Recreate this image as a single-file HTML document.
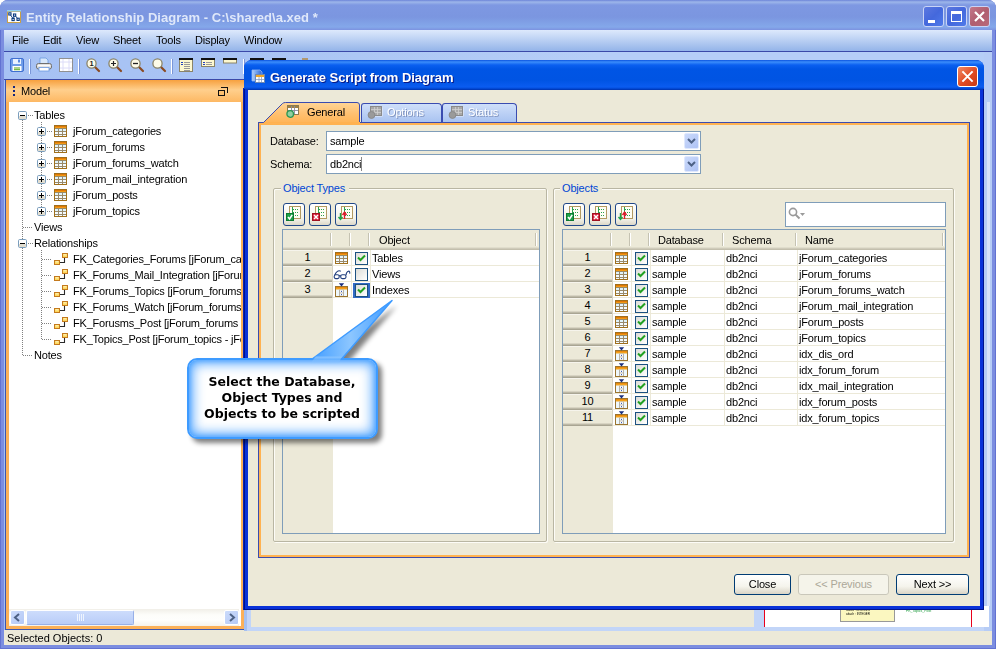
<!DOCTYPE html>
<html><head><meta charset="utf-8"><title>Entity Relationship Diagram</title>
<style>
*{box-sizing:border-box;margin:0;padding:0}
#root{position:absolute;left:0;top:0;width:996px;height:649px}
.t,.rh,.btn{will-change:opacity}
html,body{width:996px;height:649px;overflow:hidden;background:#fff}
body{position:relative;font:11px "Liberation Sans","DejaVu Sans",sans-serif;color:#000;letter-spacing:-0.17px}
.a{position:absolute}
.t{position:absolute;white-space:nowrap;line-height:14px;height:14px}
svg{position:absolute;overflow:visible}
#titlebar{left:0;top:0;width:996px;height:30px;border-radius:8px 8px 0 0;background:linear-gradient(#6c84d8 0,#9db6ea 2px,#7e98e2 5px,#7b96e0 17px,#84a8ea 27px,#7c92e0 30px)}
#title{left:26px;top:9.5px;font:bold 13px "Liberation Sans",sans-serif;color:#dfe8fa;letter-spacing:0.03px;line-height:16px;height:16px}
#menubar{left:4px;top:30px;width:988px;height:21px;background:linear-gradient(#dde9fc,#94b4e9)}
#toolbar{left:4px;top:51px;width:988px;height:29px;background:linear-gradient(90deg,#a7c2f4,#a9c4f4 25%,#b6cef7 60%,#b6cef7);border-top:1px solid #3b49a8;border-bottom:1px solid #3b49a8}
.cap{width:21px;height:21px;top:6px;border:1px solid #c9d4f6;border-radius:3px}

#dlg{left:244px;top:60px;width:740px;height:550px;border-radius:8px 8px 0 0;background:#0831d9;overflow:hidden}
#dtitle{left:0;top:0;width:740px;height:30px;background:linear-gradient(#0a53e0 0,#3b8dfb 2px,#0a5ff0 5px,#0055e5 9px,#0054e3 20px,#0a5cf0 27px,#0043cc 29px,#0030a8 30px)}
#dbody{left:4px;top:30px;width:732px;height:516px;background:#ece9d8}
#dttext{left:26px;top:10px;font:bold 13px "Liberation Sans",sans-serif;color:#fff;text-shadow:1px 1px 0 #0a1883;letter-spacing:-0.05px;line-height:16px;height:16px}
.tab{top:103px;height:19px;border:1px solid #3a4cb0;border-bottom:0;border-radius:3px 4px 0 0;background:linear-gradient(#cfdffa,#a9c3f1)}
.tab .t{color:#fff;text-shadow:1px 1px 0 #8a9cc0;top:3px}
.fs{border:1px solid #b9b6a3;border-radius:2px;box-shadow:inset 1px 1px 0 #fdfcf7,1px 1px 0 #fdfcf7}
.leg{color:#0046d5;background:#ece9d8;padding:0 4px 0 2px}
.sbtn{width:22px;height:23px;border:1px solid #1f4788;border-radius:3px;background:linear-gradient(#fff,#f3f2ea 70%,#dcd8c8)}
.grid{border:1px solid #7f9db9;background:#fff;overflow:hidden}
.hdr{left:0;top:0;height:20px;background:linear-gradient(#ece9d8 0,#ece9d8 17px,#e0ddcc 17px,#e0ddcc 18px,#cfcbba 18px,#cfcbba 19px,#c3bfad 19px)}
.hs{top:3px;width:2px;height:13px;background:linear-gradient(90deg,#c5c2b2 0,#c5c2b2 1px,#fff 1px)}
.rh{left:0;width:50px;height:16px;background:linear-gradient(#f6f4ec 0,#f6f4ec 1px,#ece9d8 1px,#ece9d8 13px,#d8d4c3 13px,#d8d4c3 14px,#bdb9a7 14px,#bdb9a7 15px,#a9a593 15px);text-align:center;line-height:14px;border-right:1px solid #d6d2c2}
.gl{height:1px;background:#ece9d8}
.cb{width:13px;height:13px;border:1px solid #1c5180;background:linear-gradient(135deg,#dcdcd7,#fff)}
.btn{top:574px;height:21px;border:1px solid #003c74;border-radius:3px;background:linear-gradient(#fff,#f5f4ec 60%,#d9d4c6);text-align:center;line-height:19px}
.combo{left:326px;width:375px;height:20px;border:1px solid #7f9db9;background:#fff}
.cbtn{left:357px;top:1px;width:15px;height:16px;border-radius:2px;background:linear-gradient(135deg,#cbdafb,#aec2f4);border:1px solid #dfe8fd}
</style></head>
<body>
<div class="a" style="left:0;top:0;width:996px;height:649px;border-radius:8px 8px 0 0;background:#7b8de0;border-left:1px solid #6272d2;border-right:1px solid #6272d2;border-bottom:1px solid #6272d2"></div>
<div class="a" id="titlebar"></div>
<svg style="left:7px;top:10px" width="14" height="13" viewBox="0 0 14 13" ><rect x="0.5" y="1.500" width="13" height="11" fill="#fff" stroke="#c8a048"/><rect x="0" y="0" width="14" height="1.500" fill="#8fd0f5"/><path d="M3 4.500L6.500 9M8 5.500L11 9M7 6L6.500 9" stroke="#0a3a80" stroke-width="0.9" fill="none"/><rect x="1.8" y="2.8" width="2.200" height="2.200" fill="#fff" stroke="#0a3a80" stroke-width="1.100"/><rect x="6.5" y="4" width="2.200" height="2.200" fill="#fff" stroke="#0a3a80" stroke-width="1.100"/><rect x="5" y="8.4" width="2.200" height="2.200" fill="#fff" stroke="#0a3a80" stroke-width="1.100"/><rect x="10" y="8.2" width="2.200" height="2.200" fill="#fff" stroke="#0a3a80" stroke-width="1.100"/></svg>
<div class="t" id="title">Entity Relationship Diagram - C:\shared\a.xed *</div>
<div class="a cap" style="left:923px;background:linear-gradient(135deg,#5c78e0,#4468dc 50%,#4f7aea)"><div class="a" style="left:4px;top:13px;width:7px;height:3px;background:#fff"></div></div>
<div class="a cap" style="left:946px;background:linear-gradient(135deg,#5c78e0,#4468dc 50%,#4f7aea)"><div class="a" style="left:4px;top:4px;width:11px;height:11px;border:1px solid #fff;border-top-width:3px"></div></div>
<div class="a cap" style="left:969px;background:linear-gradient(135deg,#c4788a,#b05e70 50%,#b8687a)"><svg style="left:4px;top:4px" width="11" height="11" viewBox="0 0 11 11"><path d="M1 1L10 10M10 1L1 10" stroke="#fff" stroke-width="2.2" fill="none"/></svg></div>
<div class="a" id="menubar"></div>
<div class="t" style="left:12px;top:33px">File</div>
<div class="t" style="left:43px;top:33px">Edit</div>
<div class="t" style="left:76px;top:33px">View</div>
<div class="t" style="left:113px;top:33px">Sheet</div>
<div class="t" style="left:156px;top:33px">Tools</div>
<div class="t" style="left:195px;top:33px">Display</div>
<div class="t" style="left:244px;top:33px">Window</div>
<div class="a" id="toolbar"></div>
<svg style="left:10px;top:58px" width="14" height="14" viewBox="0 0 14 14" ><rect x="0.5" y="0.5" width="13" height="13" rx="1.5" fill="#6f9ce8" stroke="#3f6fd0"/><rect x="3" y="1" width="8" height="5" fill="#eaf2ff"/><rect x="2.5" y="8" width="9" height="5" fill="#fff"/><rect x="4" y="9.5" width="6" height="1" fill="#58a818"/><rect x="4" y="11.2" width="6" height="1" fill="#58a818"/><rect x="8" y="1.5" width="2" height="3" fill="#5b8be0"/></svg>
<div class="a" style="left:29px;top:59px;width:2px;height:15px;background:linear-gradient(90deg,#fff 0,#fff 1px,#7a96d8 1px)"></div>
<svg style="left:36px;top:57px" width="16" height="15" viewBox="0 0 16 15" ><path d="M4 1H10L12 3V7H4Z" fill="#d8e8fb" stroke="#6a9ae0" stroke-width="0.8"/><rect x="0.5" y="6.5" width="15" height="5.5" rx="2" fill="#e0e0e0" stroke="#707070"/><rect x="3" y="10.5" width="10" height="3.5" fill="#fff" stroke="#6a9ae0" stroke-width="0.8"/><rect x="2" y="8" width="12" height="1.2" fill="#fafafa"/></svg>
<svg style="left:59px;top:58px" width="14" height="14" viewBox="0 0 14 14" ><rect x="0.5" y="0.5" width="13" height="13" fill="#fff" stroke="#909090"/><path d="M4 1V13M10 1V13M1 4H13M1 10H13" stroke="#dcdcf8" stroke-width="1"/></svg>
<div class="a" style="left:78px;top:59px;width:2px;height:15px;background:linear-gradient(90deg,#fff 0,#fff 1px,#7a96d8 1px)"></div>
<svg style="left:86px;top:58px" width="14" height="14" viewBox="0 0 14 14" ><path d="M8.5 8.5L13 13" stroke="#8a4a20" stroke-width="2.2" stroke-linecap="round"/><circle cx="5.5" cy="5.5" r="4.6" fill="#fdfbe8" stroke="#8a8468" stroke-width="1.3"/><text x="5.600" y="8.300" text-anchor="middle" font-family="Liberation Sans,sans-serif" font-size="7.500" font-weight="bold" fill="#222">1</text></svg>
<svg style="left:108px;top:58px" width="14" height="14" viewBox="0 0 14 14" ><path d="M8.5 8.5L13 13" stroke="#8a4a20" stroke-width="2.2" stroke-linecap="round"/><circle cx="5.5" cy="5.5" r="4.6" fill="#fdfbe8" stroke="#8a8468" stroke-width="1.3"/><path d="M3 5.5H8M5.5 3V8" stroke="#222" stroke-width="1.2" fill="none"/></svg>
<svg style="left:130px;top:58px" width="14" height="14" viewBox="0 0 14 14" ><path d="M8.5 8.5L13 13" stroke="#8a4a20" stroke-width="2.2" stroke-linecap="round"/><circle cx="5.5" cy="5.5" r="4.6" fill="#fdfbe8" stroke="#8a8468" stroke-width="1.3"/><path d="M3 5.5H8" stroke="#222" stroke-width="1.3" fill="none"/></svg>
<svg style="left:152px;top:58px" width="14" height="14" viewBox="0 0 14 14" ><path d="M8.5 8.5L13 13" stroke="#8a4a20" stroke-width="2.2" stroke-linecap="round"/><circle cx="5.5" cy="5.5" r="4.6" fill="#fdfbe8" stroke="#8a8468" stroke-width="1.3"/></svg>
<div class="a" style="left:171px;top:59px;width:2px;height:15px;background:linear-gradient(90deg,#fff 0,#fff 1px,#7a96d8 1px)"></div>
<svg style="left:179px;top:58px" width="14" height="14" viewBox="0 0 14 14" ><rect x="0.5" y="0.5" width="13" height="13" fill="#fdf8d0" stroke="#8a8468"/><rect x="0" y="0" width="14" height="2" fill="#111"/><rect x="5" y="4" width="6" height="1" fill="#999"/><rect x="5" y="6" width="6" height="1" fill="#999"/><rect x="5" y="8" width="6" height="1" fill="#999"/><rect x="5" y="10" width="6" height="1" fill="#999"/><rect x="5" y="12" width="6" height="1" fill="#999"/><rect x="2" y="4" width="2" height="1" fill="#2040c0"/><rect x="2" y="6" width="2" height="1" fill="#2040c0"/></svg>
<svg style="left:201px;top:58px" width="14" height="9" viewBox="0 0 14 9" ><rect x="0.5" y="0.5" width="13" height="8" fill="#fdf8d0" stroke="#8a8468"/><rect x="0" y="0" width="14" height="2" fill="#111"/><rect x="2" y="4" width="2" height="1" fill="#2040c0"/><rect x="2" y="6" width="2" height="1" fill="#2040c0"/><rect x="5" y="4" width="6" height="1" fill="#999"/><rect x="5" y="6" width="6" height="1" fill="#999"/></svg>
<svg style="left:223px;top:58px" width="14" height="5" viewBox="0 0 14 5" ><rect x="0.5" y="0.5" width="13" height="4.5" fill="#fdf8d0" stroke="#8a8468"/><rect x="0" y="0" width="14" height="2" fill="#111"/></svg>
<div class="a" style="left:243px;top:59px;width:2px;height:15px;background:linear-gradient(90deg,#fff 0,#fff 1px,#7a96d8 1px)"></div>
<div class="a" style="left:250px;top:58px;width:14px;height:2px;background:#111"></div>
<div class="a" style="left:272px;top:58px;width:14px;height:2px;background:#111"></div>
<div class="a" style="left:302px;top:58px;width:6px;height:2px;background:#b09870"></div>
<div class="a" style="left:4px;top:80px;width:2px;height:565px;background:#a3bff4"></div>
<div class="a" style="left:5px;top:80px;width:1px;height:550px;background:#3b55b0"></div>
<div class="a" style="left:6px;top:80px;width:238px;height:550px;background:#fbb058"></div>
<div class="a" style="left:6px;top:80px;width:238px;height:22px;background:linear-gradient(#f7a13f,#ffcf8c 45%,#fdb863)"></div>
<div class="a" style="left:9px;top:102px;width:232px;height:524px;background:#fff"></div>
<div class="a" style="left:13px;top:86px;width:2px;height:2px;background:#16277c"></div>
<div class="a" style="left:13px;top:90px;width:2px;height:2px;background:#16277c"></div>
<div class="a" style="left:13px;top:94px;width:2px;height:2px;background:#16277c"></div>
<div class="t" style="left:21px;top:84px">Model</div>
<div class="a" style="left:221px;top:87px;width:7px;height:6px;border:1px solid #111;border-left:0;border-bottom:0"></div>
<div class="a" style="left:218px;top:90px;width:7px;height:6px;border:1px solid #111;background:#fdc070"></div>
<div class="a" style="left:22px;top:120px;width:1px;height:236px;background:repeating-linear-gradient(#808080 0,#808080 1px,transparent 1px,transparent 2px)"></div>
<svg style="left:18px;top:111px" width="9" height="9" viewBox="0 0 9 9" ><rect x="0.5" y="0.5" width="8" height="8" rx="1.2" fill="#fff" stroke="#7b9ebd"/><rect x="1" y="5" width="7" height="3" fill="#d9d4c4" opacity="0.8"/><path d="M2 4.5H7" stroke="#000" stroke-width="1" fill="none"/></svg>
<div class="a" style="left:28px;top:115px;width:5px;height:1px;background:repeating-linear-gradient(90deg,#808080 0,#808080 1px,transparent 1px,transparent 2px)"></div>
<div class="t" style="left:34px;top:108px">Tables</div>
<div class="a" style="left:41px;top:122px;width:1px;height:90px;background:repeating-linear-gradient(#808080 0,#808080 1px,transparent 1px,transparent 2px)"></div>
<svg style="left:37px;top:127px" width="9" height="9" viewBox="0 0 9 9" ><rect x="0.5" y="0.5" width="8" height="8" rx="1.2" fill="#fff" stroke="#7b9ebd"/><rect x="1" y="5" width="7" height="3" fill="#d9d4c4" opacity="0.8"/><path d="M2 4.5H7 M4.5 2V7" stroke="#000" stroke-width="1" fill="none"/></svg>
<div class="a" style="left:47px;top:131px;width:5px;height:1px;background:repeating-linear-gradient(90deg,#808080 0,#808080 1px,transparent 1px,transparent 2px)"></div>
<svg style="left:54px;top:125px" width="13" height="12" viewBox="0 0 13 12" ><rect x="0.5" y="0.5" width="12" height="11" fill="#f4fbff" stroke="#a0701c"/><rect x="1" y="1" width="11" height="2" fill="#f29a12"/><rect x="1" y="1" width="11" height="1" fill="#e07808"/><path d="M1 3.5H12M1 6.5H12M1 9.5H12M4.5 3V11M8.5 3V11" stroke="#9a8a6a" stroke-width="1" fill="none"/><rect x="5" y="4" width="3" height="2" fill="#dff3fb"/><rect x="1" y="4" width="3" height="2" fill="#dff3fb"/><rect x="9" y="4" width="3" height="2" fill="#dff3fb"/></svg>
<div class="t" style="left:73px;top:124px">jForum_categories</div>
<svg style="left:37px;top:143px" width="9" height="9" viewBox="0 0 9 9" ><rect x="0.5" y="0.5" width="8" height="8" rx="1.2" fill="#fff" stroke="#7b9ebd"/><rect x="1" y="5" width="7" height="3" fill="#d9d4c4" opacity="0.8"/><path d="M2 4.5H7 M4.5 2V7" stroke="#000" stroke-width="1" fill="none"/></svg>
<div class="a" style="left:47px;top:147px;width:5px;height:1px;background:repeating-linear-gradient(90deg,#808080 0,#808080 1px,transparent 1px,transparent 2px)"></div>
<svg style="left:54px;top:141px" width="13" height="12" viewBox="0 0 13 12" ><rect x="0.5" y="0.5" width="12" height="11" fill="#f4fbff" stroke="#a0701c"/><rect x="1" y="1" width="11" height="2" fill="#f29a12"/><rect x="1" y="1" width="11" height="1" fill="#e07808"/><path d="M1 3.5H12M1 6.5H12M1 9.5H12M4.5 3V11M8.5 3V11" stroke="#9a8a6a" stroke-width="1" fill="none"/><rect x="5" y="4" width="3" height="2" fill="#dff3fb"/><rect x="1" y="4" width="3" height="2" fill="#dff3fb"/><rect x="9" y="4" width="3" height="2" fill="#dff3fb"/></svg>
<div class="t" style="left:73px;top:140px">jForum_forums</div>
<svg style="left:37px;top:159px" width="9" height="9" viewBox="0 0 9 9" ><rect x="0.5" y="0.5" width="8" height="8" rx="1.2" fill="#fff" stroke="#7b9ebd"/><rect x="1" y="5" width="7" height="3" fill="#d9d4c4" opacity="0.8"/><path d="M2 4.5H7 M4.5 2V7" stroke="#000" stroke-width="1" fill="none"/></svg>
<div class="a" style="left:47px;top:163px;width:5px;height:1px;background:repeating-linear-gradient(90deg,#808080 0,#808080 1px,transparent 1px,transparent 2px)"></div>
<svg style="left:54px;top:157px" width="13" height="12" viewBox="0 0 13 12" ><rect x="0.5" y="0.5" width="12" height="11" fill="#f4fbff" stroke="#a0701c"/><rect x="1" y="1" width="11" height="2" fill="#f29a12"/><rect x="1" y="1" width="11" height="1" fill="#e07808"/><path d="M1 3.5H12M1 6.5H12M1 9.5H12M4.5 3V11M8.5 3V11" stroke="#9a8a6a" stroke-width="1" fill="none"/><rect x="5" y="4" width="3" height="2" fill="#dff3fb"/><rect x="1" y="4" width="3" height="2" fill="#dff3fb"/><rect x="9" y="4" width="3" height="2" fill="#dff3fb"/></svg>
<div class="t" style="left:73px;top:156px">jForum_forums_watch</div>
<svg style="left:37px;top:175px" width="9" height="9" viewBox="0 0 9 9" ><rect x="0.5" y="0.5" width="8" height="8" rx="1.2" fill="#fff" stroke="#7b9ebd"/><rect x="1" y="5" width="7" height="3" fill="#d9d4c4" opacity="0.8"/><path d="M2 4.5H7 M4.5 2V7" stroke="#000" stroke-width="1" fill="none"/></svg>
<div class="a" style="left:47px;top:179px;width:5px;height:1px;background:repeating-linear-gradient(90deg,#808080 0,#808080 1px,transparent 1px,transparent 2px)"></div>
<svg style="left:54px;top:173px" width="13" height="12" viewBox="0 0 13 12" ><rect x="0.5" y="0.5" width="12" height="11" fill="#f4fbff" stroke="#a0701c"/><rect x="1" y="1" width="11" height="2" fill="#f29a12"/><rect x="1" y="1" width="11" height="1" fill="#e07808"/><path d="M1 3.5H12M1 6.5H12M1 9.5H12M4.5 3V11M8.5 3V11" stroke="#9a8a6a" stroke-width="1" fill="none"/><rect x="5" y="4" width="3" height="2" fill="#dff3fb"/><rect x="1" y="4" width="3" height="2" fill="#dff3fb"/><rect x="9" y="4" width="3" height="2" fill="#dff3fb"/></svg>
<div class="t" style="left:73px;top:172px">jForum_mail_integration</div>
<svg style="left:37px;top:191px" width="9" height="9" viewBox="0 0 9 9" ><rect x="0.5" y="0.5" width="8" height="8" rx="1.2" fill="#fff" stroke="#7b9ebd"/><rect x="1" y="5" width="7" height="3" fill="#d9d4c4" opacity="0.8"/><path d="M2 4.5H7 M4.5 2V7" stroke="#000" stroke-width="1" fill="none"/></svg>
<div class="a" style="left:47px;top:195px;width:5px;height:1px;background:repeating-linear-gradient(90deg,#808080 0,#808080 1px,transparent 1px,transparent 2px)"></div>
<svg style="left:54px;top:189px" width="13" height="12" viewBox="0 0 13 12" ><rect x="0.5" y="0.5" width="12" height="11" fill="#f4fbff" stroke="#a0701c"/><rect x="1" y="1" width="11" height="2" fill="#f29a12"/><rect x="1" y="1" width="11" height="1" fill="#e07808"/><path d="M1 3.5H12M1 6.5H12M1 9.5H12M4.5 3V11M8.5 3V11" stroke="#9a8a6a" stroke-width="1" fill="none"/><rect x="5" y="4" width="3" height="2" fill="#dff3fb"/><rect x="1" y="4" width="3" height="2" fill="#dff3fb"/><rect x="9" y="4" width="3" height="2" fill="#dff3fb"/></svg>
<div class="t" style="left:73px;top:188px">jForum_posts</div>
<svg style="left:37px;top:207px" width="9" height="9" viewBox="0 0 9 9" ><rect x="0.5" y="0.5" width="8" height="8" rx="1.2" fill="#fff" stroke="#7b9ebd"/><rect x="1" y="5" width="7" height="3" fill="#d9d4c4" opacity="0.8"/><path d="M2 4.5H7 M4.5 2V7" stroke="#000" stroke-width="1" fill="none"/></svg>
<div class="a" style="left:47px;top:211px;width:5px;height:1px;background:repeating-linear-gradient(90deg,#808080 0,#808080 1px,transparent 1px,transparent 2px)"></div>
<svg style="left:54px;top:205px" width="13" height="12" viewBox="0 0 13 12" ><rect x="0.5" y="0.5" width="12" height="11" fill="#f4fbff" stroke="#a0701c"/><rect x="1" y="1" width="11" height="2" fill="#f29a12"/><rect x="1" y="1" width="11" height="1" fill="#e07808"/><path d="M1 3.5H12M1 6.5H12M1 9.5H12M4.5 3V11M8.5 3V11" stroke="#9a8a6a" stroke-width="1" fill="none"/><rect x="5" y="4" width="3" height="2" fill="#dff3fb"/><rect x="1" y="4" width="3" height="2" fill="#dff3fb"/><rect x="9" y="4" width="3" height="2" fill="#dff3fb"/></svg>
<div class="t" style="left:73px;top:204px">jForum_topics</div>
<div class="a" style="left:23px;top:227px;width:9px;height:1px;background:repeating-linear-gradient(90deg,#808080 0,#808080 1px,transparent 1px,transparent 2px)"></div>
<div class="t" style="left:34px;top:220px">Views</div>
<svg style="left:18px;top:239px" width="9" height="9" viewBox="0 0 9 9" ><rect x="0.5" y="0.5" width="8" height="8" rx="1.2" fill="#fff" stroke="#7b9ebd"/><rect x="1" y="5" width="7" height="3" fill="#d9d4c4" opacity="0.8"/><path d="M2 4.5H7" stroke="#000" stroke-width="1" fill="none"/></svg>
<div class="a" style="left:28px;top:243px;width:5px;height:1px;background:repeating-linear-gradient(90deg,#808080 0,#808080 1px,transparent 1px,transparent 2px)"></div>
<div class="t" style="left:34px;top:236px">Relationships</div>
<div class="a" style="left:41px;top:250px;width:1px;height:90px;background:repeating-linear-gradient(#808080 0,#808080 1px,transparent 1px,transparent 2px)"></div>
<div class="a" style="left:9px;top:250px;width:232px;height:100px;overflow:hidden">
<div class="t" style="left:64px;top:2px;letter-spacing:-0.2px">FK_Categories_Forums [jForum_categories - jForum_forums]</div>
<div class="t" style="left:64px;top:18px;letter-spacing:-0.2px">FK_Forums_Mail_Integration [jForum_forums - jForum_mail_integration]</div>
<div class="t" style="left:64px;top:34px;letter-spacing:-0.2px">FK_Forums_Topics [jForum_forums - jForum_topics]</div>
<div class="t" style="left:64px;top:50px;letter-spacing:-0.2px">FK_Forums_Watch [jForum_forums - jForum_forums_watch]</div>
<div class="t" style="left:64px;top:66px;letter-spacing:-0.2px">FK_Forusms_Post [jForum_forums - jForum_posts]</div>
<div class="t" style="left:64px;top:82px;letter-spacing:-0.2px">FK_Topics_Post [jForum_topics - jForum_posts]</div>
</div>
<div class="a" style="left:42px;top:259px;width:10px;height:1px;background:repeating-linear-gradient(90deg,#808080 0,#808080 1px,transparent 1px,transparent 2px)"></div>
<svg style="left:54px;top:253px" width="14" height="12" viewBox="0 0 14 12" ><path d="M6 9.5H10.5V5" stroke="#2a2a2a" stroke-width="1.1" fill="none"/><rect x="8.5" y="0.5" width="5" height="4" fill="#ffd85c" stroke="#c47a1e"/><rect x="0.5" y="7.5" width="5" height="4" fill="#ffd85c" stroke="#c47a1e"/><rect x="9.5" y="1.2" width="3" height="1.2" fill="#fff3b8"/><rect x="1.5" y="8.2" width="3" height="1.2" fill="#fff3b8"/></svg>
<div class="a" style="left:42px;top:275px;width:10px;height:1px;background:repeating-linear-gradient(90deg,#808080 0,#808080 1px,transparent 1px,transparent 2px)"></div>
<svg style="left:54px;top:269px" width="14" height="12" viewBox="0 0 14 12" ><path d="M6 9.5H10.5V5" stroke="#2a2a2a" stroke-width="1.1" fill="none"/><rect x="8.5" y="0.5" width="5" height="4" fill="#ffd85c" stroke="#c47a1e"/><rect x="0.5" y="7.5" width="5" height="4" fill="#ffd85c" stroke="#c47a1e"/><rect x="9.5" y="1.2" width="3" height="1.2" fill="#fff3b8"/><rect x="1.5" y="8.2" width="3" height="1.2" fill="#fff3b8"/></svg>
<div class="a" style="left:42px;top:291px;width:10px;height:1px;background:repeating-linear-gradient(90deg,#808080 0,#808080 1px,transparent 1px,transparent 2px)"></div>
<svg style="left:54px;top:285px" width="14" height="12" viewBox="0 0 14 12" ><path d="M6 9.5H10.5V5" stroke="#2a2a2a" stroke-width="1.1" fill="none"/><rect x="8.5" y="0.5" width="5" height="4" fill="#ffd85c" stroke="#c47a1e"/><rect x="0.5" y="7.5" width="5" height="4" fill="#ffd85c" stroke="#c47a1e"/><rect x="9.5" y="1.2" width="3" height="1.2" fill="#fff3b8"/><rect x="1.5" y="8.2" width="3" height="1.2" fill="#fff3b8"/></svg>
<div class="a" style="left:42px;top:307px;width:10px;height:1px;background:repeating-linear-gradient(90deg,#808080 0,#808080 1px,transparent 1px,transparent 2px)"></div>
<svg style="left:54px;top:301px" width="14" height="12" viewBox="0 0 14 12" ><path d="M6 9.5H10.5V5" stroke="#2a2a2a" stroke-width="1.1" fill="none"/><rect x="8.5" y="0.5" width="5" height="4" fill="#ffd85c" stroke="#c47a1e"/><rect x="0.5" y="7.5" width="5" height="4" fill="#ffd85c" stroke="#c47a1e"/><rect x="9.5" y="1.2" width="3" height="1.2" fill="#fff3b8"/><rect x="1.5" y="8.2" width="3" height="1.2" fill="#fff3b8"/></svg>
<div class="a" style="left:42px;top:323px;width:10px;height:1px;background:repeating-linear-gradient(90deg,#808080 0,#808080 1px,transparent 1px,transparent 2px)"></div>
<svg style="left:54px;top:317px" width="14" height="12" viewBox="0 0 14 12" ><path d="M6 9.5H10.5V5" stroke="#2a2a2a" stroke-width="1.1" fill="none"/><rect x="8.5" y="0.5" width="5" height="4" fill="#ffd85c" stroke="#c47a1e"/><rect x="0.5" y="7.5" width="5" height="4" fill="#ffd85c" stroke="#c47a1e"/><rect x="9.5" y="1.2" width="3" height="1.2" fill="#fff3b8"/><rect x="1.5" y="8.2" width="3" height="1.2" fill="#fff3b8"/></svg>
<div class="a" style="left:42px;top:339px;width:10px;height:1px;background:repeating-linear-gradient(90deg,#808080 0,#808080 1px,transparent 1px,transparent 2px)"></div>
<svg style="left:54px;top:333px" width="14" height="12" viewBox="0 0 14 12" ><path d="M6 9.5H10.5V5" stroke="#2a2a2a" stroke-width="1.1" fill="none"/><rect x="8.5" y="0.5" width="5" height="4" fill="#ffd85c" stroke="#c47a1e"/><rect x="0.5" y="7.5" width="5" height="4" fill="#ffd85c" stroke="#c47a1e"/><rect x="9.5" y="1.2" width="3" height="1.2" fill="#fff3b8"/><rect x="1.5" y="8.2" width="3" height="1.2" fill="#fff3b8"/></svg>
<div class="a" style="left:23px;top:355px;width:9px;height:1px;background:repeating-linear-gradient(90deg,#808080 0,#808080 1px,transparent 1px,transparent 2px)"></div>
<div class="t" style="left:34px;top:348px">Notes</div>
<div class="a" style="left:9px;top:609px;width:230px;height:17px;background:linear-gradient(#f1efe8,#fdfdfa 35%,#fefefc 65%,#f4f2ec)"></div>
<div class="a" style="left:10px;top:610px;width:15px;height:15px;border-radius:2px;background:linear-gradient(135deg,#cbdbfb,#b4c8f5);border:1px solid #fff"></div>
<svg style="left:13px;top:613px" width="8" height="9"><path d="M6 1L2 4.5L6 8" stroke="#4d6185" stroke-width="2" fill="none"/></svg>
<div class="a" style="left:224px;top:610px;width:15px;height:15px;border-radius:2px;background:linear-gradient(135deg,#cbdbfb,#b4c8f5);border:1px solid #fff"></div>
<svg style="left:228px;top:613px" width="8" height="9"><path d="M2 1L6 4.5L2 8" stroke="#4d6185" stroke-width="2" fill="none"/></svg>
<div class="a" style="left:26px;top:610px;width:108px;height:15px;border-radius:2px;background:linear-gradient(#cddcfc,#b9cdf8);border:1px solid #fff;border-right-color:#98b0e8;border-bottom-color:#98b0e8"></div>
<div class="a" style="left:77px;top:614px;width:1px;height:7px;background:#eef4fe"></div>
<div class="a" style="left:79px;top:614px;width:1px;height:7px;background:#eef4fe"></div>
<div class="a" style="left:81px;top:614px;width:1px;height:7px;background:#eef4fe"></div>
<div class="a" style="left:83px;top:614px;width:1px;height:7px;background:#eef4fe"></div>
<div class="a" style="left:4px;top:630px;width:988px;height:15px;background:#ece9d8"></div>
<div class="t" style="left:7px;top:631px;letter-spacing:0">Selected Objects: 0</div>
<div class="a" style="left:244px;top:606px;width:3px;height:25px;background:#a5c0f0"></div>
<div class="a" style="left:247px;top:606px;width:745px;height:25px;background:#c2d5f8"></div>
<div class="a" style="left:251px;top:610px;width:503px;height:17px;background:#ece9d8"></div>
<div class="a" style="left:764px;top:606px;width:224px;height:21px;background:#fff"></div>
<div class="a" style="left:764px;top:606px;width:1px;height:21px;background:#e8001c"></div>
<div class="a" style="left:971px;top:606px;width:1px;height:21px;background:#e8001c"></div>
<div class="a" style="left:840px;top:606px;width:55px;height:16px;background:#fbf7c0;border:1px solid #999;border-top:0"></div>
<div class="t" style="left:846px;top:608px;font-size:3px;line-height:4px;height:8px;letter-spacing:0">status : INTEGER<br>attach : INTEGER</div>
<div class="t" style="left:906px;top:609px;font-size:3.5px;line-height:4px;height:4px;color:#1a9a3a;letter-spacing:0">FK_Topics_Post</div>
<div class="a" style="left:984px;top:52px;width:8px;height:579px;background:#b6ccf6"></div>
<div class="a" style="left:987px;top:102px;width:3px;height:504px;background:#d8e3f9"></div>
<div class="a" style="left:984px;top:606px;width:5px;height:21px;background:#fff"></div>
<div class="a" style="left:5px;top:629px;width:239px;height:1px;background:#3b55b0"></div>
<div class="a" style="left:243px;top:88px;width:2px;height:522px;background:#0b22b0"></div>
<div class="a" id="dlg"><div class="a" id="dtitle"></div><div class="a" id="dbody"></div>
<div class="a" style="left:0;top:29px;width:1px;height:521px;background:#00138c"></div><div class="a" style="left:739px;top:29px;width:1px;height:521px;background:#00138c"></div><div class="a" style="left:0;top:549px;width:740px;height:1px;background:#00138c"></div>
<svg style="left:7px;top:9px" width="14" height="14" viewBox="0 0 14 14" ><defs><linearGradient id="dg" x1="0" y1="0" x2="1" y2="0"><stop offset="0" stop-color="#b4d0fa"/><stop offset="0.45" stop-color="#6fa0ee"/><stop offset="1" stop-color="#2f66d6"/></linearGradient></defs><path d="M1 1H9L11 3V12H1Z" fill="url(#dg)" stroke="#8db4f4" stroke-width="0.8"/><rect x="4.5" y="5.5" width="9" height="8" fill="#fff" stroke="#7088b0"/><rect x="5" y="6" width="8" height="2" fill="#f0a828"/><path d="M5 10.5H13M8 8V13M10.5 8V13" stroke="#8aa0c8" stroke-width="0.8"/></svg>
<div class="t" id="dttext">Generate Script from Diagram</div>
<div class="a" style="left:713px;top:6px;width:21px;height:21px;border:1px solid #fff;border-radius:3px;background:linear-gradient(135deg,#f08a66,#e04a22 55%,#c63a14)"><svg style="left:4px;top:4px" width="11" height="11" viewBox="0 0 11 11"><path d="M0.400 0.400L10.600 10.600M10.600 0.400L0.400 10.600" stroke="#fff" stroke-width="2" fill="none"/></svg></div>
</div>
<div class="a" style="left:258px;top:122px;width:712px;height:436px;border:1px solid #3a4cb0;background:#ffb251"></div>
<div class="a" style="left:261px;top:125px;width:706px;height:430px;background:#ece9d8"></div>
<svg style="left:258px;top:101px" width="104" height="24" viewBox="0 0 104 24"><defs><linearGradient id="tg" x1="0" y1="0" x2="0" y2="1"><stop offset="0" stop-color="#ffd596"/><stop offset="0.5" stop-color="#ffc070"/><stop offset="1" stop-color="#ffb251"/></linearGradient></defs><path d="M0.5 24V21.5H5.5L24.5 2.5Q25.5 1.5 27.5 1.5H99Q101.500 1.500 101.500 4V21.5" fill="url(#tg)" stroke="none"/><path d="M0.5 24V21.5H5.5L24.5 2.5Q25.5 1.5 27.5 1.5H99Q101.500 1.500 101.500 4V21.500" fill="none" stroke="#3a4cb0" stroke-width="1"/></svg>
<div class="a" style="left:264px;top:122px;width:96px;height:1px;background:#ffb251"></div>
<svg style="left:285px;top:105px" width="16" height="13" viewBox="0 0 16 13" ><rect x="2.500" y="0.500" width="11" height="9" fill="#fff" stroke="#8a7a50"/><rect x="3" y="1" width="10" height="2" fill="#a08040"/><path d="M3 5.500H13M6.500 1V9M9.500 1V9" stroke="#8a8a9a" stroke-width="0.9"/><circle cx="5.2" cy="9" r="3.3" fill="#8fd0a0" stroke="#2a9652" stroke-width="1.300"/></svg>
<div class="t" style="left:307px;top:105px">General</div>
<div class="a tab" style="left:361px;width:81px"></div>
<div class="a tab" style="left:442px;width:75px"></div>
<svg style="left:368px;top:106px" width="16" height="13" viewBox="0 0 16 13" ><rect x="3.500" y="1.500" width="11" height="9" fill="#fff" opacity="0.7"/><rect x="2.500" y="0.500" width="11" height="9" fill="#a9a9a9" stroke="#8a8a8a"/><path d="M3 3.500H13M3 6.500H13M6.500 1V9M9.500 1V9" stroke="#d0d0d0" stroke-width="0.8"/><circle cx="3.500" cy="9" r="3.400" fill="#9a9a9a" stroke="#8a8a8a" stroke-width="1"/></svg>
<svg style="left:449px;top:106px" width="16" height="13" viewBox="0 0 16 13" ><rect x="3.500" y="1.500" width="11" height="9" fill="#fff" opacity="0.7"/><rect x="2.500" y="0.500" width="11" height="9" fill="#a9a9a9" stroke="#8a8a8a"/><path d="M3 3.500H13M3 6.500H13M6.500 1V9M9.500 1V9" stroke="#d0d0d0" stroke-width="0.8"/><circle cx="3.500" cy="9" r="3.400" fill="#9a9a9a" stroke="#8a8a8a" stroke-width="1"/></svg>
<div class="t" style="left:387px;top:105px;color:#fff;text-shadow:1px 1px 0 #8093bd">Options</div>
<div class="t" style="left:468px;top:105px;color:#fff;text-shadow:1px 1px 0 #8093bd">Status</div>
<div class="t" style="left:270px;top:134px">Database:</div>
<div class="t" style="left:270px;top:157px">Schema:</div>
<div class="a combo" style="top:131px"><div class="t" style="left:3px;top:2px">sample</div><div class="a cbtn"></div><svg style="left:360px;top:6px" width="9" height="7"><path d="M1 1L4.500 4.500L8 1" stroke="#4d6185" stroke-width="2" fill="none"/></svg></div>
<div class="a combo" style="top:154px"><div class="t" style="left:3px;top:2px">db2nci</div><div class="a cbtn"></div><svg style="left:360px;top:6px" width="9" height="7"><path d="M1 1L4.500 4.500L8 1" stroke="#4d6185" stroke-width="2" fill="none"/></svg></div>
<div class="a" style="left:361px;top:157px;width:1px;height:14px;background:#8a8a8a"></div>
<div class="a fs" style="left:273px;top:188px;width:274px;height:354px"></div>
<div class="t leg" style="left:281px;top:181px">Object Types</div>
<div class="a fs" style="left:553px;top:188px;width:401px;height:354px"></div>
<div class="t leg" style="left:560px;top:181px">Objects</div>
<div class="a sbtn" style="left:283px;top:203px"></div>
<svg style="left:286px;top:206px" width="16" height="16" viewBox="0 0 16 16" ><rect x="3.5" y="0.5" width="11" height="12" fill="#fffef4" stroke="#b39a62"/><path d="M6.5 1V12" stroke="#2aa050" stroke-width="1"/><path d="M7 3.5H13" stroke="#2aa050" stroke-width="1" stroke-dasharray="1 1"/><path d="M7 6.5H13" stroke="#2aa050" stroke-width="1" stroke-dasharray="1 1"/><path d="M7 9.5H13" stroke="#2aa050" stroke-width="1" stroke-dasharray="1 1"/><rect x="0.5" y="7.5" width="7" height="7" fill="#1da04a" stroke="#0c7a30"/><path d="M2 11L3.6 13L6.2 8.8" stroke="#fff" stroke-width="1.5" fill="none"/></svg>
<div class="a sbtn" style="left:309px;top:203px"></div>
<svg style="left:312px;top:206px" width="16" height="16" viewBox="0 0 16 16" ><rect x="3.5" y="0.5" width="11" height="12" fill="#fffef4" stroke="#b39a62"/><path d="M6.5 1V12" stroke="#2aa050" stroke-width="1"/><path d="M7 3.5H13" stroke="#2aa050" stroke-width="1" stroke-dasharray="1 1"/><path d="M7 6.5H13" stroke="#2aa050" stroke-width="1" stroke-dasharray="1 1"/><path d="M7 9.5H13" stroke="#2aa050" stroke-width="1" stroke-dasharray="1 1"/><rect x="0.5" y="7.5" width="7" height="7" fill="#d8203a" stroke="#a01020"/><path d="M2 9L6 13M6 9L2 13" stroke="#fff" stroke-width="1.5" fill="none"/></svg>
<div class="a sbtn" style="left:335px;top:203px"></div>
<svg style="left:338px;top:206px" width="16" height="16" viewBox="0 0 16 16" ><rect x="3.5" y="0.5" width="11" height="12" fill="#fffef4" stroke="#b39a62"/><path d="M6.5 1V12" stroke="#2aa050" stroke-width="1"/><path d="M7 3.5H13" stroke="#2aa050" stroke-width="1" stroke-dasharray="1 1"/><path d="M7 6.5H13" stroke="#2aa050" stroke-width="1" stroke-dasharray="1 1"/><path d="M7 9.5H13" stroke="#2aa050" stroke-width="1" stroke-dasharray="1 1"/><path d="M2.5 7V13M0.5 11L2.5 13.5L4.5 11" stroke="#1da04a" stroke-width="1.4" fill="none"/><path d="M6.5 13V7M4.5 9L6.5 6.2L8.5 9" stroke="#e0182c" stroke-width="1.4" fill="none"/></svg>
<div class="a sbtn" style="left:563px;top:203px"></div>
<svg style="left:566px;top:206px" width="16" height="16" viewBox="0 0 16 16" ><rect x="3.5" y="0.5" width="11" height="12" fill="#fffef4" stroke="#b39a62"/><path d="M6.5 1V12" stroke="#2aa050" stroke-width="1"/><path d="M7 3.5H13" stroke="#2aa050" stroke-width="1" stroke-dasharray="1 1"/><path d="M7 6.5H13" stroke="#2aa050" stroke-width="1" stroke-dasharray="1 1"/><path d="M7 9.5H13" stroke="#2aa050" stroke-width="1" stroke-dasharray="1 1"/><rect x="0.5" y="7.5" width="7" height="7" fill="#1da04a" stroke="#0c7a30"/><path d="M2 11L3.6 13L6.2 8.8" stroke="#fff" stroke-width="1.5" fill="none"/></svg>
<div class="a sbtn" style="left:589px;top:203px"></div>
<svg style="left:592px;top:206px" width="16" height="16" viewBox="0 0 16 16" ><rect x="3.5" y="0.5" width="11" height="12" fill="#fffef4" stroke="#b39a62"/><path d="M6.5 1V12" stroke="#2aa050" stroke-width="1"/><path d="M7 3.5H13" stroke="#2aa050" stroke-width="1" stroke-dasharray="1 1"/><path d="M7 6.5H13" stroke="#2aa050" stroke-width="1" stroke-dasharray="1 1"/><path d="M7 9.5H13" stroke="#2aa050" stroke-width="1" stroke-dasharray="1 1"/><rect x="0.5" y="7.5" width="7" height="7" fill="#d8203a" stroke="#a01020"/><path d="M2 9L6 13M6 9L2 13" stroke="#fff" stroke-width="1.5" fill="none"/></svg>
<div class="a sbtn" style="left:615px;top:203px"></div>
<svg style="left:618px;top:206px" width="16" height="16" viewBox="0 0 16 16" ><rect x="3.5" y="0.5" width="11" height="12" fill="#fffef4" stroke="#b39a62"/><path d="M6.5 1V12" stroke="#2aa050" stroke-width="1"/><path d="M7 3.5H13" stroke="#2aa050" stroke-width="1" stroke-dasharray="1 1"/><path d="M7 6.5H13" stroke="#2aa050" stroke-width="1" stroke-dasharray="1 1"/><path d="M7 9.5H13" stroke="#2aa050" stroke-width="1" stroke-dasharray="1 1"/><path d="M2.5 7V13M0.5 11L2.5 13.5L4.5 11" stroke="#1da04a" stroke-width="1.4" fill="none"/><path d="M6.5 13V7M4.5 9L6.5 6.2L8.5 9" stroke="#e0182c" stroke-width="1.4" fill="none"/></svg>
<div class="a grid" style="left:282px;top:229px;width:258px;height:305px">
<div class="a" style="left:0;top:20px;width:50px;height:285px;background:#ece9d8"></div>
<div class="a hdr" style="width:256px"></div>
<div class="a hs" style="left:47px"></div>
<div class="a hs" style="left:66px"></div>
<div class="a hs" style="left:85px"></div>
<div class="a hs" style="left:252px"></div>
<div class="t" style="left:96px;top:3px">Object</div>
<div class="a rh" style="top:20px">1</div>
<div class="a gl" style="left:50px;top:35px;width:206px"></div>
<div class="a" style="left:68px;top:20px;width:1px;height:16px;background:#ece9d8"></div>
<div class="a" style="left:87px;top:20px;width:1px;height:16px;background:#ece9d8"></div>
<svg style="left:52px;top:22px" width="13" height="12" viewBox="0 0 13 12" ><rect x="0.5" y="0.5" width="12" height="11" fill="#f4fbff" stroke="#a0701c"/><rect x="1" y="1" width="11" height="2" fill="#f29a12"/><rect x="1" y="1" width="11" height="1" fill="#e07808"/><path d="M1 3.5H12M1 6.5H12M1 9.5H12M4.5 3V11M8.5 3V11" stroke="#9a8a6a" stroke-width="1" fill="none"/><rect x="5" y="4" width="3" height="2" fill="#dff3fb"/><rect x="1" y="4" width="3" height="2" fill="#dff3fb"/><rect x="9" y="4" width="3" height="2" fill="#dff3fb"/></svg>
<div class="a cb" style="left:72px;top:22px"><svg style="left:1px;top:1px" width="9" height="9" viewBox="0 0 9 9"><path d="M1 3.5L3.5 6L8 1.5" stroke="#21a121" stroke-width="2" fill="none"/></svg></div>
<div class="t" style="left:89px;top:21px">Tables</div>
<div class="a rh" style="top:36px">2</div>
<div class="a gl" style="left:50px;top:51px;width:206px"></div>
<div class="a" style="left:68px;top:36px;width:1px;height:16px;background:#ece9d8"></div>
<div class="a" style="left:87px;top:36px;width:1px;height:16px;background:#ece9d8"></div>
<svg style="left:50px;top:39.5px" width="17" height="9" viewBox="0 0 17 9" ><rect x="1.200" y="4.800" width="5" height="3.800" rx="1.600" fill="none" stroke="#223f7e" stroke-width="1.1"/><rect x="7.700" y="4.800" width="5.300" height="3.800" rx="1.600" fill="none" stroke="#223f7e" stroke-width="1.1"/><path d="M6.200 5.600H7.700M1.800 5C2.800 2.600 4.800 0.700 6.400 0.700C7 0.700 7.400 0.900 7.700 1.300M13 5.200C13.200 3 14 1.500 15.400 1.200C16.500 1 17 2 16.700 3.600" fill="none" stroke="#223f7e" stroke-width="1.1"/></svg>
<div class="a cb" style="left:72px;top:38px"></div>
<div class="t" style="left:89px;top:37px">Views</div>
<div class="a rh" style="top:52px">3</div>
<div class="a gl" style="left:50px;top:67px;width:206px"></div>
<div class="a" style="left:68px;top:52px;width:1px;height:16px;background:#ece9d8"></div>
<div class="a" style="left:87px;top:52px;width:1px;height:16px;background:#ece9d8"></div>
<svg style="left:52px;top:53px" width="13" height="14" viewBox="0 0 13 14" ><rect x="0.5" y="3.5" width="12" height="10" fill="#eef8fd" stroke="#9a7430"/><rect x="1" y="4" width="11" height="2.5" fill="#f5a21a"/><rect x="1" y="4" width="11" height="1" fill="#e88a10"/><rect x="4" y="6.5" width="5" height="6.500" fill="#b8b4a8"/><rect x="5" y="7.200" width="3" height="2.300" fill="#fff"/><rect x="5" y="10.400" width="3" height="2.300" fill="#fff"/><rect x="6" y="7.900" width="1" height="1" fill="#2a50b0"/><rect x="6" y="11.100" width="1" height="1" fill="#2a50b0"/><path d="M3.800 0.300H9.200L6.500 3.600Z" fill="#1a2f80"/></svg>
<div class="a" style="left:70px;top:53px;width:17px;height:15px;border:2px solid #316ac5"></div>
<div class="a cb" style="left:72px;top:54px"><svg style="left:1px;top:1px" width="9" height="9" viewBox="0 0 9 9"><path d="M1 3.5L3.5 6L8 1.5" stroke="#21a121" stroke-width="2" fill="none"/></svg></div>
<div class="t" style="left:89px;top:53px">Indexes</div>
</div>
<div class="a" style="left:785px;top:202px;width:161px;height:25px;border:1px solid #7f9db9;background:#fff"></div>
<svg style="left:788px;top:207px" width="18" height="14" viewBox="0 0 18 14"><circle cx="5" cy="5" r="3.6" fill="none" stroke="#9a9a9a" stroke-width="1.6"/><path d="M7.600 7.600L11.500 11.500" stroke="#9a9a9a" stroke-width="2"/><path d="M12 6H17L14.500 9Z" fill="#9a9a9a"/></svg>
<div class="a grid" style="left:562px;top:229px;width:384px;height:305px">
<div class="a" style="left:0;top:20px;width:50px;height:285px;background:#ece9d8"></div>
<div class="a hdr" style="width:382px"></div>
<div class="a hs" style="left:47px"></div>
<div class="a hs" style="left:66px"></div>
<div class="a hs" style="left:85px"></div>
<div class="a hs" style="left:159px"></div>
<div class="a hs" style="left:232px"></div>
<div class="a hs" style="left:379px"></div>
<div class="t" style="left:95px;top:3px">Database</div><div class="t" style="left:169px;top:3px">Schema</div><div class="t" style="left:242px;top:3px">Name</div>
<div class="a rh" style="top:20px">1</div>
<div class="a gl" style="left:50px;top:35px;width:332px"></div>
<div class="a" style="left:68px;top:20px;width:1px;height:16px;background:#ece9d8"></div>
<div class="a" style="left:87px;top:20px;width:1px;height:16px;background:#ece9d8"></div>
<div class="a" style="left:161px;top:20px;width:1px;height:16px;background:#ece9d8"></div>
<div class="a" style="left:234px;top:20px;width:1px;height:16px;background:#ece9d8"></div>
<svg style="left:52px;top:22px" width="13" height="12" viewBox="0 0 13 12" ><rect x="0.5" y="0.5" width="12" height="11" fill="#f4fbff" stroke="#a0701c"/><rect x="1" y="1" width="11" height="2" fill="#f29a12"/><rect x="1" y="1" width="11" height="1" fill="#e07808"/><path d="M1 3.5H12M1 6.5H12M1 9.5H12M4.5 3V11M8.5 3V11" stroke="#9a8a6a" stroke-width="1" fill="none"/><rect x="5" y="4" width="3" height="2" fill="#dff3fb"/><rect x="1" y="4" width="3" height="2" fill="#dff3fb"/><rect x="9" y="4" width="3" height="2" fill="#dff3fb"/></svg>
<div class="a cb" style="left:72px;top:22px"><svg style="left:1px;top:1px" width="9" height="9" viewBox="0 0 9 9"><path d="M1 3.5L3.5 6L8 1.5" stroke="#21a121" stroke-width="2" fill="none"/></svg></div>
<div class="t" style="left:89px;top:21px">sample</div><div class="t" style="left:163px;top:21px">db2nci</div><div class="t" style="left:236px;top:21px">jForum_categories</div>
<div class="a rh" style="top:36px">2</div>
<div class="a gl" style="left:50px;top:51px;width:332px"></div>
<div class="a" style="left:68px;top:36px;width:1px;height:16px;background:#ece9d8"></div>
<div class="a" style="left:87px;top:36px;width:1px;height:16px;background:#ece9d8"></div>
<div class="a" style="left:161px;top:36px;width:1px;height:16px;background:#ece9d8"></div>
<div class="a" style="left:234px;top:36px;width:1px;height:16px;background:#ece9d8"></div>
<svg style="left:52px;top:38px" width="13" height="12" viewBox="0 0 13 12" ><rect x="0.5" y="0.5" width="12" height="11" fill="#f4fbff" stroke="#a0701c"/><rect x="1" y="1" width="11" height="2" fill="#f29a12"/><rect x="1" y="1" width="11" height="1" fill="#e07808"/><path d="M1 3.5H12M1 6.5H12M1 9.5H12M4.5 3V11M8.5 3V11" stroke="#9a8a6a" stroke-width="1" fill="none"/><rect x="5" y="4" width="3" height="2" fill="#dff3fb"/><rect x="1" y="4" width="3" height="2" fill="#dff3fb"/><rect x="9" y="4" width="3" height="2" fill="#dff3fb"/></svg>
<div class="a cb" style="left:72px;top:38px"><svg style="left:1px;top:1px" width="9" height="9" viewBox="0 0 9 9"><path d="M1 3.5L3.5 6L8 1.5" stroke="#21a121" stroke-width="2" fill="none"/></svg></div>
<div class="t" style="left:89px;top:37px">sample</div><div class="t" style="left:163px;top:37px">db2nci</div><div class="t" style="left:236px;top:37px">jForum_forums</div>
<div class="a rh" style="top:52px">3</div>
<div class="a gl" style="left:50px;top:67px;width:332px"></div>
<div class="a" style="left:68px;top:52px;width:1px;height:16px;background:#ece9d8"></div>
<div class="a" style="left:87px;top:52px;width:1px;height:16px;background:#ece9d8"></div>
<div class="a" style="left:161px;top:52px;width:1px;height:16px;background:#ece9d8"></div>
<div class="a" style="left:234px;top:52px;width:1px;height:16px;background:#ece9d8"></div>
<svg style="left:52px;top:54px" width="13" height="12" viewBox="0 0 13 12" ><rect x="0.5" y="0.5" width="12" height="11" fill="#f4fbff" stroke="#a0701c"/><rect x="1" y="1" width="11" height="2" fill="#f29a12"/><rect x="1" y="1" width="11" height="1" fill="#e07808"/><path d="M1 3.5H12M1 6.5H12M1 9.5H12M4.5 3V11M8.5 3V11" stroke="#9a8a6a" stroke-width="1" fill="none"/><rect x="5" y="4" width="3" height="2" fill="#dff3fb"/><rect x="1" y="4" width="3" height="2" fill="#dff3fb"/><rect x="9" y="4" width="3" height="2" fill="#dff3fb"/></svg>
<div class="a cb" style="left:72px;top:54px"><svg style="left:1px;top:1px" width="9" height="9" viewBox="0 0 9 9"><path d="M1 3.5L3.5 6L8 1.5" stroke="#21a121" stroke-width="2" fill="none"/></svg></div>
<div class="t" style="left:89px;top:53px">sample</div><div class="t" style="left:163px;top:53px">db2nci</div><div class="t" style="left:236px;top:53px">jForum_forums_watch</div>
<div class="a rh" style="top:68px">4</div>
<div class="a gl" style="left:50px;top:83px;width:332px"></div>
<div class="a" style="left:68px;top:68px;width:1px;height:16px;background:#ece9d8"></div>
<div class="a" style="left:87px;top:68px;width:1px;height:16px;background:#ece9d8"></div>
<div class="a" style="left:161px;top:68px;width:1px;height:16px;background:#ece9d8"></div>
<div class="a" style="left:234px;top:68px;width:1px;height:16px;background:#ece9d8"></div>
<svg style="left:52px;top:70px" width="13" height="12" viewBox="0 0 13 12" ><rect x="0.5" y="0.5" width="12" height="11" fill="#f4fbff" stroke="#a0701c"/><rect x="1" y="1" width="11" height="2" fill="#f29a12"/><rect x="1" y="1" width="11" height="1" fill="#e07808"/><path d="M1 3.5H12M1 6.5H12M1 9.5H12M4.5 3V11M8.5 3V11" stroke="#9a8a6a" stroke-width="1" fill="none"/><rect x="5" y="4" width="3" height="2" fill="#dff3fb"/><rect x="1" y="4" width="3" height="2" fill="#dff3fb"/><rect x="9" y="4" width="3" height="2" fill="#dff3fb"/></svg>
<div class="a cb" style="left:72px;top:70px"><svg style="left:1px;top:1px" width="9" height="9" viewBox="0 0 9 9"><path d="M1 3.5L3.5 6L8 1.5" stroke="#21a121" stroke-width="2" fill="none"/></svg></div>
<div class="t" style="left:89px;top:69px">sample</div><div class="t" style="left:163px;top:69px">db2nci</div><div class="t" style="left:236px;top:69px">jForum_mail_integration</div>
<div class="a rh" style="top:84px">5</div>
<div class="a gl" style="left:50px;top:99px;width:332px"></div>
<div class="a" style="left:68px;top:84px;width:1px;height:16px;background:#ece9d8"></div>
<div class="a" style="left:87px;top:84px;width:1px;height:16px;background:#ece9d8"></div>
<div class="a" style="left:161px;top:84px;width:1px;height:16px;background:#ece9d8"></div>
<div class="a" style="left:234px;top:84px;width:1px;height:16px;background:#ece9d8"></div>
<svg style="left:52px;top:86px" width="13" height="12" viewBox="0 0 13 12" ><rect x="0.5" y="0.5" width="12" height="11" fill="#f4fbff" stroke="#a0701c"/><rect x="1" y="1" width="11" height="2" fill="#f29a12"/><rect x="1" y="1" width="11" height="1" fill="#e07808"/><path d="M1 3.5H12M1 6.5H12M1 9.5H12M4.5 3V11M8.5 3V11" stroke="#9a8a6a" stroke-width="1" fill="none"/><rect x="5" y="4" width="3" height="2" fill="#dff3fb"/><rect x="1" y="4" width="3" height="2" fill="#dff3fb"/><rect x="9" y="4" width="3" height="2" fill="#dff3fb"/></svg>
<div class="a cb" style="left:72px;top:86px"><svg style="left:1px;top:1px" width="9" height="9" viewBox="0 0 9 9"><path d="M1 3.5L3.5 6L8 1.5" stroke="#21a121" stroke-width="2" fill="none"/></svg></div>
<div class="t" style="left:89px;top:85px">sample</div><div class="t" style="left:163px;top:85px">db2nci</div><div class="t" style="left:236px;top:85px">jForum_posts</div>
<div class="a rh" style="top:100px">6</div>
<div class="a gl" style="left:50px;top:115px;width:332px"></div>
<div class="a" style="left:68px;top:100px;width:1px;height:16px;background:#ece9d8"></div>
<div class="a" style="left:87px;top:100px;width:1px;height:16px;background:#ece9d8"></div>
<div class="a" style="left:161px;top:100px;width:1px;height:16px;background:#ece9d8"></div>
<div class="a" style="left:234px;top:100px;width:1px;height:16px;background:#ece9d8"></div>
<svg style="left:52px;top:102px" width="13" height="12" viewBox="0 0 13 12" ><rect x="0.5" y="0.5" width="12" height="11" fill="#f4fbff" stroke="#a0701c"/><rect x="1" y="1" width="11" height="2" fill="#f29a12"/><rect x="1" y="1" width="11" height="1" fill="#e07808"/><path d="M1 3.5H12M1 6.5H12M1 9.5H12M4.5 3V11M8.5 3V11" stroke="#9a8a6a" stroke-width="1" fill="none"/><rect x="5" y="4" width="3" height="2" fill="#dff3fb"/><rect x="1" y="4" width="3" height="2" fill="#dff3fb"/><rect x="9" y="4" width="3" height="2" fill="#dff3fb"/></svg>
<div class="a cb" style="left:72px;top:102px"><svg style="left:1px;top:1px" width="9" height="9" viewBox="0 0 9 9"><path d="M1 3.5L3.5 6L8 1.5" stroke="#21a121" stroke-width="2" fill="none"/></svg></div>
<div class="t" style="left:89px;top:101px">sample</div><div class="t" style="left:163px;top:101px">db2nci</div><div class="t" style="left:236px;top:101px">jForum_topics</div>
<div class="a rh" style="top:116px">7</div>
<div class="a gl" style="left:50px;top:131px;width:332px"></div>
<div class="a" style="left:68px;top:116px;width:1px;height:16px;background:#ece9d8"></div>
<div class="a" style="left:87px;top:116px;width:1px;height:16px;background:#ece9d8"></div>
<div class="a" style="left:161px;top:116px;width:1px;height:16px;background:#ece9d8"></div>
<div class="a" style="left:234px;top:116px;width:1px;height:16px;background:#ece9d8"></div>
<svg style="left:52px;top:117px" width="13" height="14" viewBox="0 0 13 14" ><rect x="0.5" y="3.5" width="12" height="10" fill="#eef8fd" stroke="#9a7430"/><rect x="1" y="4" width="11" height="2.5" fill="#f5a21a"/><rect x="1" y="4" width="11" height="1" fill="#e88a10"/><rect x="4" y="6.5" width="5" height="6.500" fill="#b8b4a8"/><rect x="5" y="7.200" width="3" height="2.300" fill="#fff"/><rect x="5" y="10.400" width="3" height="2.300" fill="#fff"/><rect x="6" y="7.900" width="1" height="1" fill="#2a50b0"/><rect x="6" y="11.100" width="1" height="1" fill="#2a50b0"/><path d="M3.800 0.300H9.200L6.500 3.600Z" fill="#1a2f80"/></svg>
<div class="a cb" style="left:72px;top:118px"><svg style="left:1px;top:1px" width="9" height="9" viewBox="0 0 9 9"><path d="M1 3.5L3.5 6L8 1.5" stroke="#21a121" stroke-width="2" fill="none"/></svg></div>
<div class="t" style="left:89px;top:117px">sample</div><div class="t" style="left:163px;top:117px">db2nci</div><div class="t" style="left:236px;top:117px">idx_dis_ord</div>
<div class="a rh" style="top:132px">8</div>
<div class="a gl" style="left:50px;top:147px;width:332px"></div>
<div class="a" style="left:68px;top:132px;width:1px;height:16px;background:#ece9d8"></div>
<div class="a" style="left:87px;top:132px;width:1px;height:16px;background:#ece9d8"></div>
<div class="a" style="left:161px;top:132px;width:1px;height:16px;background:#ece9d8"></div>
<div class="a" style="left:234px;top:132px;width:1px;height:16px;background:#ece9d8"></div>
<svg style="left:52px;top:133px" width="13" height="14" viewBox="0 0 13 14" ><rect x="0.5" y="3.5" width="12" height="10" fill="#eef8fd" stroke="#9a7430"/><rect x="1" y="4" width="11" height="2.5" fill="#f5a21a"/><rect x="1" y="4" width="11" height="1" fill="#e88a10"/><rect x="4" y="6.5" width="5" height="6.500" fill="#b8b4a8"/><rect x="5" y="7.200" width="3" height="2.300" fill="#fff"/><rect x="5" y="10.400" width="3" height="2.300" fill="#fff"/><rect x="6" y="7.900" width="1" height="1" fill="#2a50b0"/><rect x="6" y="11.100" width="1" height="1" fill="#2a50b0"/><path d="M3.800 0.300H9.200L6.500 3.600Z" fill="#1a2f80"/></svg>
<div class="a cb" style="left:72px;top:134px"><svg style="left:1px;top:1px" width="9" height="9" viewBox="0 0 9 9"><path d="M1 3.5L3.5 6L8 1.5" stroke="#21a121" stroke-width="2" fill="none"/></svg></div>
<div class="t" style="left:89px;top:133px">sample</div><div class="t" style="left:163px;top:133px">db2nci</div><div class="t" style="left:236px;top:133px">idx_forum_forum</div>
<div class="a rh" style="top:148px">9</div>
<div class="a gl" style="left:50px;top:163px;width:332px"></div>
<div class="a" style="left:68px;top:148px;width:1px;height:16px;background:#ece9d8"></div>
<div class="a" style="left:87px;top:148px;width:1px;height:16px;background:#ece9d8"></div>
<div class="a" style="left:161px;top:148px;width:1px;height:16px;background:#ece9d8"></div>
<div class="a" style="left:234px;top:148px;width:1px;height:16px;background:#ece9d8"></div>
<svg style="left:52px;top:149px" width="13" height="14" viewBox="0 0 13 14" ><rect x="0.5" y="3.5" width="12" height="10" fill="#eef8fd" stroke="#9a7430"/><rect x="1" y="4" width="11" height="2.5" fill="#f5a21a"/><rect x="1" y="4" width="11" height="1" fill="#e88a10"/><rect x="4" y="6.5" width="5" height="6.500" fill="#b8b4a8"/><rect x="5" y="7.200" width="3" height="2.300" fill="#fff"/><rect x="5" y="10.400" width="3" height="2.300" fill="#fff"/><rect x="6" y="7.900" width="1" height="1" fill="#2a50b0"/><rect x="6" y="11.100" width="1" height="1" fill="#2a50b0"/><path d="M3.800 0.300H9.200L6.500 3.600Z" fill="#1a2f80"/></svg>
<div class="a cb" style="left:72px;top:150px"><svg style="left:1px;top:1px" width="9" height="9" viewBox="0 0 9 9"><path d="M1 3.5L3.5 6L8 1.5" stroke="#21a121" stroke-width="2" fill="none"/></svg></div>
<div class="t" style="left:89px;top:149px">sample</div><div class="t" style="left:163px;top:149px">db2nci</div><div class="t" style="left:236px;top:149px">idx_mail_integration</div>
<div class="a rh" style="top:164px">10</div>
<div class="a gl" style="left:50px;top:179px;width:332px"></div>
<div class="a" style="left:68px;top:164px;width:1px;height:16px;background:#ece9d8"></div>
<div class="a" style="left:87px;top:164px;width:1px;height:16px;background:#ece9d8"></div>
<div class="a" style="left:161px;top:164px;width:1px;height:16px;background:#ece9d8"></div>
<div class="a" style="left:234px;top:164px;width:1px;height:16px;background:#ece9d8"></div>
<svg style="left:52px;top:165px" width="13" height="14" viewBox="0 0 13 14" ><rect x="0.5" y="3.5" width="12" height="10" fill="#eef8fd" stroke="#9a7430"/><rect x="1" y="4" width="11" height="2.5" fill="#f5a21a"/><rect x="1" y="4" width="11" height="1" fill="#e88a10"/><rect x="4" y="6.5" width="5" height="6.500" fill="#b8b4a8"/><rect x="5" y="7.200" width="3" height="2.300" fill="#fff"/><rect x="5" y="10.400" width="3" height="2.300" fill="#fff"/><rect x="6" y="7.900" width="1" height="1" fill="#2a50b0"/><rect x="6" y="11.100" width="1" height="1" fill="#2a50b0"/><path d="M3.800 0.300H9.200L6.500 3.600Z" fill="#1a2f80"/></svg>
<div class="a cb" style="left:72px;top:166px"><svg style="left:1px;top:1px" width="9" height="9" viewBox="0 0 9 9"><path d="M1 3.5L3.5 6L8 1.5" stroke="#21a121" stroke-width="2" fill="none"/></svg></div>
<div class="t" style="left:89px;top:165px">sample</div><div class="t" style="left:163px;top:165px">db2nci</div><div class="t" style="left:236px;top:165px">idx_forum_posts</div>
<div class="a rh" style="top:180px">11</div>
<div class="a gl" style="left:50px;top:195px;width:332px"></div>
<div class="a" style="left:68px;top:180px;width:1px;height:16px;background:#ece9d8"></div>
<div class="a" style="left:87px;top:180px;width:1px;height:16px;background:#ece9d8"></div>
<div class="a" style="left:161px;top:180px;width:1px;height:16px;background:#ece9d8"></div>
<div class="a" style="left:234px;top:180px;width:1px;height:16px;background:#ece9d8"></div>
<svg style="left:52px;top:181px" width="13" height="14" viewBox="0 0 13 14" ><rect x="0.5" y="3.5" width="12" height="10" fill="#eef8fd" stroke="#9a7430"/><rect x="1" y="4" width="11" height="2.5" fill="#f5a21a"/><rect x="1" y="4" width="11" height="1" fill="#e88a10"/><rect x="4" y="6.5" width="5" height="6.500" fill="#b8b4a8"/><rect x="5" y="7.200" width="3" height="2.300" fill="#fff"/><rect x="5" y="10.400" width="3" height="2.300" fill="#fff"/><rect x="6" y="7.900" width="1" height="1" fill="#2a50b0"/><rect x="6" y="11.100" width="1" height="1" fill="#2a50b0"/><path d="M3.800 0.300H9.200L6.500 3.600Z" fill="#1a2f80"/></svg>
<div class="a cb" style="left:72px;top:182px"><svg style="left:1px;top:1px" width="9" height="9" viewBox="0 0 9 9"><path d="M1 3.5L3.5 6L8 1.5" stroke="#21a121" stroke-width="2" fill="none"/></svg></div>
<div class="t" style="left:89px;top:181px">sample</div><div class="t" style="left:163px;top:181px">db2nci</div><div class="t" style="left:236px;top:181px">idx_forum_topics</div>
</div>
<div class="a btn" style="left:734px;width:57px">Close</div>
<div class="a btn" style="left:798px;width:91px;border-color:#c9c7ba;background:#f5f4ea;color:#aca899">&lt;&lt; Previous</div>
<div class="a btn" style="left:896px;width:73px">Next &gt;&gt;</div>
<svg style="left:170px;top:290px" width="240" height="170" viewBox="170 290 240 170">
<defs><linearGradient id="pg" x1="0" y1="0" x2="1" y2="0"><stop offset="0" stop-color="#3e9bff"/><stop offset="0.5" stop-color="#8cc6ff"/><stop offset="1" stop-color="#3e9bff"/></linearGradient>
<filter id="sh" x="-10%" y="-10%" width="130%" height="130%"><feGaussianBlur stdDeviation="2.5"/></filter></defs>
<path d="M197 358H313.500L392 300.500L342.500 358H367Q377 358 377 367V429Q377 438 367 438H197Q187 438 187 429V367Q187 358 197 358Z" transform="translate(5,5)" fill="#000" opacity="0.5" filter="url(#sh)"/>
<path d="M309.400 361L392 300.500L339.900 361Z" fill="url(#pg)" stroke="#3e9bff" stroke-width="1.500" stroke-linejoin="round"/>
</svg>
<div class="a" style="left:187px;top:357.500px;width:190.500px;height:81px;border:2px solid #3e9bff;border-radius:10px;background:#fff;box-shadow:inset 0 0 12px 4px rgba(62,155,255,0.85),inset 0 0 4px 1px rgba(62,155,255,0.7)"></div>
<svg style="left:300px;top:350px" width="60" height="20" viewBox="300 350 60 20"><defs><linearGradient id="pg2" x1="0" y1="0" x2="0" y2="1"><stop offset="0" stop-color="#86c2ff"/><stop offset="1" stop-color="#86c2ff" stop-opacity="0"/></linearGradient></defs><path d="M315.800 356.500H341.800L338.500 364H310Z" fill="url(#pg2)"/></svg>
<div class="t" style="left:188px;width:188px;top:374px;text-align:center;font:bold 12.5px 'DejaVu Sans','Liberation Sans',sans-serif;letter-spacing:0;line-height:16px;height:16px">Select the Database,</div>
<div class="t" style="left:188px;width:188px;top:390px;text-align:center;font:bold 12.5px 'DejaVu Sans','Liberation Sans',sans-serif;letter-spacing:0;line-height:16px;height:16px">Object Types and</div>
<div class="t" style="left:188px;width:188px;top:406px;text-align:center;font:bold 12.5px 'DejaVu Sans','Liberation Sans',sans-serif;letter-spacing:0;line-height:16px;height:16px">Objects to be scripted</div>
</body></html>
